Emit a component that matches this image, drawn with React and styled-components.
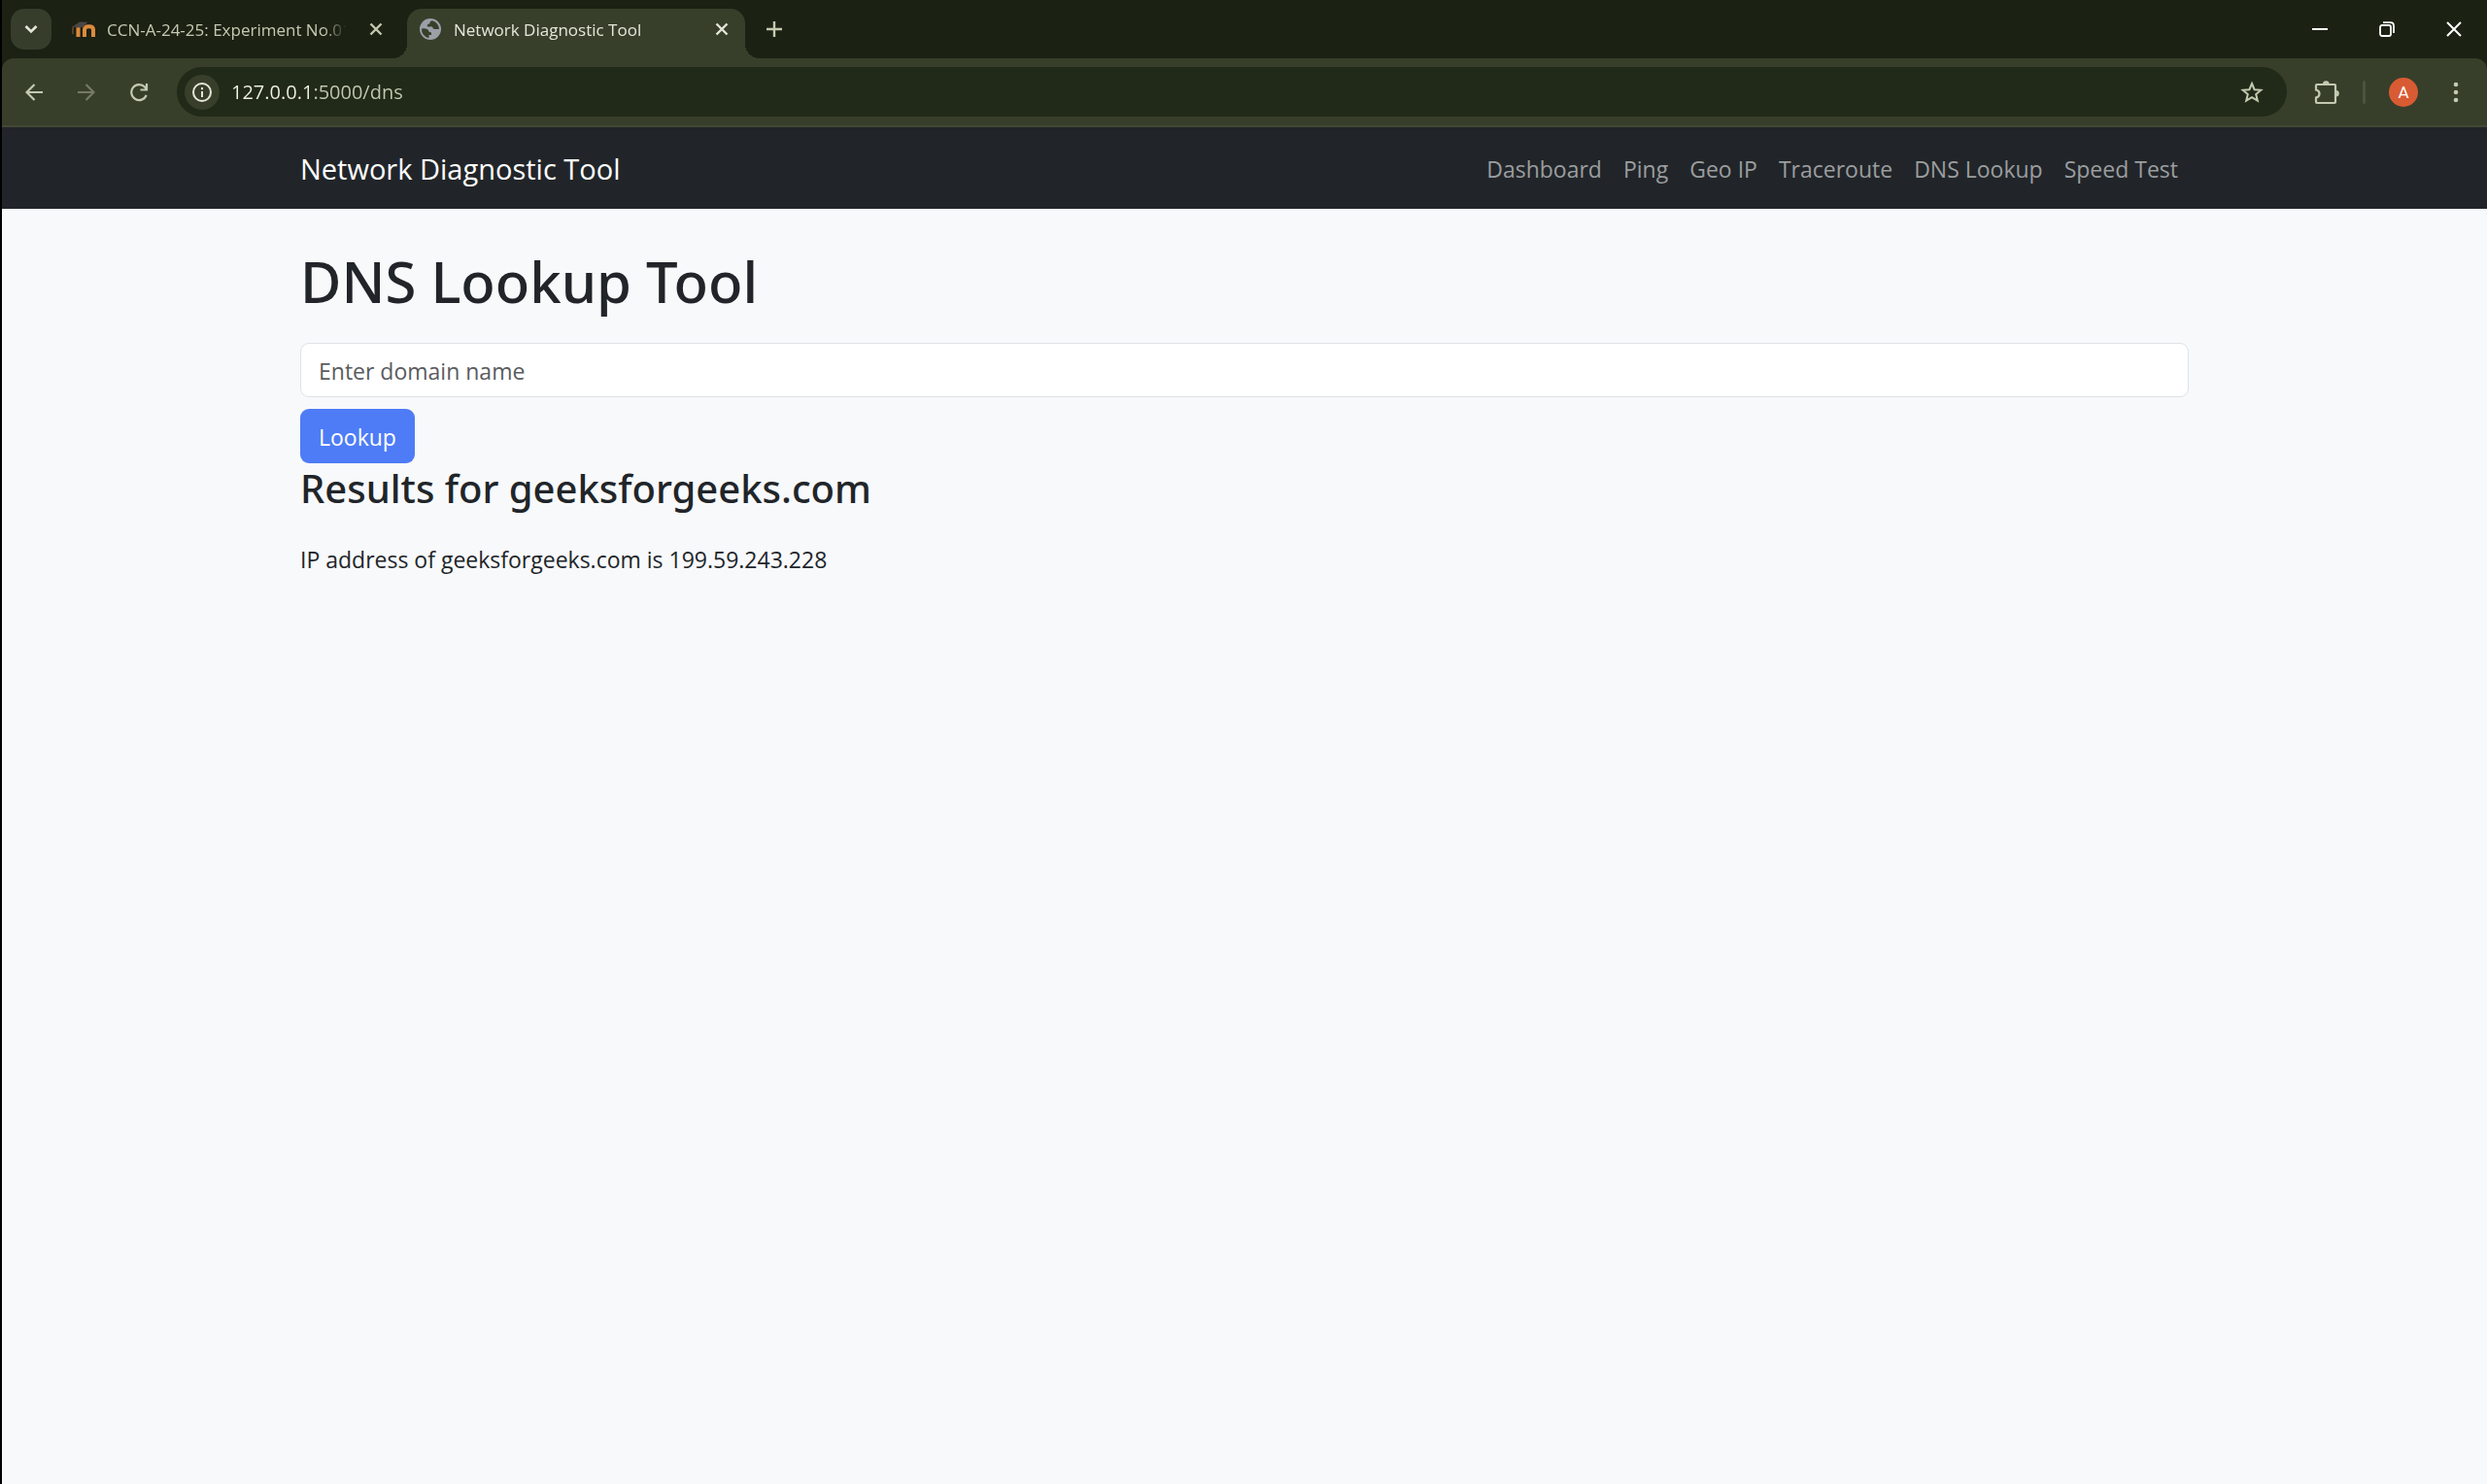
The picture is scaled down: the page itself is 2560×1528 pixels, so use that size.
import React, { useState } from 'react';
import styled, { createGlobalStyle, css } from 'styled-components';

const GlobalStyle = createGlobalStyle`
  *, *::before, *::after { box-sizing: border-box; }
  body {
    margin: 0;
    background: #f8f9fb;
    color: #212529;
    font-family: "Open Sans", "Noto Sans", sans-serif;
    font-size: 23px;
    line-height: 36px;
  }
  button, input { font: inherit; }
`;

const Window = styled.div`
  display: flex;
  flex-direction: column;
  min-height: 100vh;
  border-left: 2px solid #000;
`;

/* ---------- browser frame ---------- */

const TabStrip = styled.header`
  display: flex;
  align-items: flex-end;
  height: 60px;
  background: #1b2113;
`;

const Plain = styled.button`
  display: flex;
  align-items: center;
  justify-content: center;
  flex: none;
  padding: 0;
  border: 0;
  background: none;
  color: ${(p) => p.$color || '#c4cab0'};
`;

const TabSearch = styled(Plain)`
  width: 42px;
  height: 42px;
  margin: 0 9px 9px;
  border-radius: 14px;
  background: #363e2b;
  color: #e4e6d8;
`;

const Tabs = styled.div`
  display: flex;
  align-items: flex-end;
`;

const Tab = styled.div`
  position: relative;
  display: flex;
  align-items: center;
  width: ${(p) => (p.$active ? 348 : 357)}px;
  height: 51px;
  padding: 0 ${(p) => (p.$active ? 12 : 20)}px 9px 12px;
  gap: 12px;
  color: #c4cab0;
  ${(p) =>
    p.$active &&
    css`
      color: #e4e6d8;
      background: #373f2b;
      border-radius: 15px 15px 0 0;
      &::before,
      &::after {
        content: '';
        position: absolute;
        bottom: 0;
        width: 15px;
        height: 15px;
      }
      &::before {
        left: -15px;
        background: radial-gradient(circle at 0 0, transparent 15px, #373f2b 15px);
      }
      &::after {
        right: -15px;
        background: radial-gradient(circle at 100% 0, transparent 15px, #373f2b 15px);
      }
    `}
`;

const TabTitle = styled.span`
  flex: 1;
  overflow: hidden;
  padding-top: 2px;
  white-space: nowrap;
  font-size: 17px;
  line-height: 24px;
  mask-image: linear-gradient(90deg, #000 calc(100% - 30px), transparent calc(100% - 6px));
`;

const NewTab = styled(Plain)`
  width: 42px;
  height: 42px;
  margin: 0 0 9px 9px;
`;

const TabClose = styled(Plain)`
  width: 24px;
  height: 24px;
`;

const WindowControls = styled.div`
  display: flex;
  height: 60px;
  margin-left: auto;
`;

const WindowControl = styled(Plain)`
  width: 69px;
  color: #fff;
`;

const ToolbarBack = styled.div`
  background: #1b2113;
`;

const Toolbar = styled.div`
  display: flex;
  align-items: center;
  height: 71px;
  padding: 0 5px 0 6px;
  border-radius: 12px 12px 0 0;
  border-bottom: 2px solid #414836;
  background: #373f2b;
`;

const ToolButton = styled(Plain)`
  width: 54px;
  height: 51px;
`;

const Omnibox = styled.div`
  display: flex;
  align-items: center;
  flex: 1;
  height: 51px;
  margin: 0 14px 0 12px;
  padding: 0 8px;
  border-radius: 26px;
  background: #212918;
`;

const SiteInfo = styled(Plain)`
  width: 36px;
  height: 36px;
  border-radius: 50%;
  background: #373f2b;
`;

const Address = styled.input`
  flex: 1;
  min-width: 0;
  padding: 0 12px;
  border: 0;
  outline: 0;
  font-size: 20px;
  line-height: 30px;
  background: linear-gradient(90deg, #f0f2e4 98px, #c4cab0 98px);
  background-clip: text;
  -webkit-text-fill-color: transparent;
`;

const Bookmark = styled(Plain)`
  width: 56px;
  height: 51px;
`;

const Divider = styled.span`
  width: 3px;
  height: 24px;
  margin: 0 12px 0 10px;
  border-radius: 2px;
  background: #4c5340;
`;

const Avatar = styled.span`
  width: 30px;
  height: 30px;
  border-radius: 50%;
  background: #d95b33;
  color: #fff;
  font-family: Roboto, sans-serif;
  font-size: 17px;
  line-height: 31px;
  text-align: center;
`;

/* ---------- page ---------- */

const Container = styled.div`
  width: 100%;
  max-width: 1980px;
  margin: 0 auto;
  padding: 0 18px;
`;

const Navbar = styled.nav`
  background: #212529;
`;

const NavRow = styled(Container)`
  display: flex;
  align-items: center;
  justify-content: space-between;
  min-height: 84px;
`;

const Brand = styled.a`
  color: #fff;
  font-size: 29px;
  line-height: 45px;
  text-decoration: none;
`;

const NavLinks = styled.ul`
  display: flex;
  margin: 0;
  padding: 0;
  list-style: none;
`;

const NavLink = styled.a`
  display: block;
  padding: 13px 11px 11px;
  color: #9b9d9f;
  text-decoration: none;
`;

const Main = styled(Container).attrs({ as: 'main' })`
  padding-top: 39px;
`;

const Title = styled.h1`
  margin: 0 0 27px;
  font-family: "Noto Sans", sans-serif;
  font-size: 58px;
  font-weight: 500;
  line-height: 72px;
`;

const Form = styled.form`
  display: flex;
  flex-direction: column;
  align-items: flex-start;
  gap: 12px;
`;

const DomainInput = styled.input`
  width: 100%;
  height: 56px;
  padding: 10px 18px 8px;
  border: 1px solid #dee2e6;
  border-radius: 9px;
  background: #fff;
  color: #212529;
  &::placeholder { color: #595c5f; opacity: 1; }
`;

const Submit = styled.button`
  height: 56px;
  padding: 2px 19px 0;
  border: 0;
  border-radius: 9px;
  background: #4e7cf6;
  color: #fff;
`;

const ResultTitle = styled.h2`
  margin: 0 0 29px;
  font-family: "Noto Sans", sans-serif;
  font-size: 40px;
  font-weight: 500;
  line-height: 52px;
`;

const Result = styled.p`
  margin: 0;
`;

/* ---------- icons ---------- */

const Icon = ({ size = 24, box = 24, width = 2, children }) => (
  <svg width={size} height={size} viewBox={`0 0 ${box} ${box}`} fill="none" stroke="currentColor" strokeWidth={width} aria-hidden="true">
    {children}
  </svg>
);

const CrossIcon = () => (
  <Icon size={14} box={14} width={2.4}><path d="M1.5 1.5l11 11M12.5 1.5l-11 11" /></Icon>
);

const MoodleIcon = () => (
  <svg width="24" height="24" viewBox="0 0 24 24" fill="none" aria-hidden="true">
    <path d="M6.500 20V10M13 20v-7.500q0-3.300 4.500-3.300t4.500 3.300V20" stroke="#dd8a3c" strokeWidth="4" />
    <path d="M1 9l7-4.500 8 .3-4 5.200-7 .5z" fill="#4a4644" />
    <path d="M1.500 9q-1 4-.5 8" stroke="#6b4a30" strokeWidth="1.500" />
  </svg>
);

const GlobeIcon = () => (
  <svg width="24" height="24" viewBox="0 0 24 24" aria-hidden="true">
    <circle cx="12" cy="12" r="11" fill="#9aa0a6" />
    <path d="M3 11.500q5-.8 7 1.500 0 2.500 3 2.500v2.500h-2.500v3.200A9 9 0 0 1 3 11.500zM14 3.300q-3 .7-2.500 3-3.500.5-2.500 3.200h5q.5 3 3.500 2.500h3.500A9 9 0 0 0 14 3.300z" fill="#373f2b" />
  </svg>
);

const LINKS = ['Dashboard', 'Ping', 'Geo IP', 'Traceroute', 'DNS Lookup', 'Speed Test'];

export default function App() {
  const [url, setUrl] = useState('127.0.0.1:5000/dns');
  return (
    <Window>
      <GlobalStyle />
      <TabStrip>
        <TabSearch aria-label="Search tabs">
          <Icon size={14} box={14} width={2.6}><path d="M1.500 4l5.500 5.500L12.500 4" /></Icon>
        </TabSearch>
        <Tabs>
          <Tab>
            <MoodleIcon />
            <TabTitle>CCN-A-24-25: Experiment No.01</TabTitle>
            <TabClose aria-label="Close tab"><CrossIcon /></TabClose>
          </Tab>
          <Tab $active>
            <GlobeIcon />
            <TabTitle>Network Diagnostic Tool</TabTitle>
            <TabClose aria-label="Close tab" $color="#e4e6d8"><CrossIcon /></TabClose>
          </Tab>
        </Tabs>
        <NewTab aria-label="New tab">
          <Icon size={16} box={16} width={2.4}><path d="M8 0v16M0 8h16" /></Icon>
        </NewTab>
        <WindowControls>
          <WindowControl aria-label="Minimize"><Icon size={16} box={16}><path d="M0 8h16" /></Icon></WindowControl>
          <WindowControl aria-label="Restore">
            <Icon size={16} box={16} width={1.8}>
              <rect x="1" y="4" width="11" height="11" rx="2" />
              <path d="M4 1.200h7.500q3.500 0 3.500 3.500V12" />
            </Icon>
          </WindowControl>
          <WindowControl aria-label="Close"><Icon size={16} box={16}><path d="M1 1l14 14M15 1L1 15" /></Icon></WindowControl>
        </WindowControls>
      </TabStrip>
      <ToolbarBack>
        <Toolbar>
          <ToolButton aria-label="Back">
            <Icon size={18} box={18} width={2.2}><path d="M18 9H2M9.500 1L1.500 9l8 8" /></Icon>
          </ToolButton>
          <ToolButton aria-label="Forward" $color="#757a66">
            <Icon size={18} box={18} width={2.2}><path d="M0 9h16M8.500 1l8 8-8 8" /></Icon>
          </ToolButton>
          <ToolButton aria-label="Reload">
            <Icon size={20} box={20} width={2.2}><path d="M17.700 13A8 8 0 1 1 16 4.500L18 7M18 1v6.500h-6.500" /></Icon>
          </ToolButton>
          <Omnibox>
            <SiteInfo aria-label="Site information" $color="#e4e6d8">
              <Icon size={20} box={20}><circle cx="10" cy="10" r="9" /><path d="M10 9v6M10 5v2.200" /></Icon>
            </SiteInfo>
            <Address aria-label="Address" value={url} onChange={(e) => setUrl(e.target.value)} />
            <Bookmark aria-label="Bookmark">
              <Icon size={24} box={24}>
                <path d="M12 3l2.600 6.200 6.700.6-5.100 4.300 1.600 6.500-5.800-3.500-5.800 3.500 1.600-6.500-5.100-4.300 6.700-.6z" />
              </Icon>
            </Bookmark>
          </Omnibox>
          <ToolButton aria-label="Extensions">
            <Icon size={26} box={26} width={2.2}>
              <path d="M3 5h18q1 0 1 1v17q0 1-1 1H3q-1 0-1-1v-4.500q3.500-.8 3.500-4T2 10.500V6q0-1 1-1z" />
              <path d="M9 4.500a3.300 3.300 0 0 1 6.600 0zM22.500 11a3.300 3.300 0 0 1 0 6.600z" fill="currentColor" stroke="none" />
            </Icon>
          </ToolButton>
          <Divider />
          <ToolButton aria-label="Profile"><Avatar>A</Avatar></ToolButton>
          <ToolButton aria-label="Menu">
            <svg width="6" height="22" viewBox="0 0 6 22" fill="currentColor" aria-hidden="true">
              <circle cx="3" cy="3" r="2.300" /><circle cx="3" cy="11" r="2.300" /><circle cx="3" cy="19" r="2.300" />
            </svg>
          </ToolButton>
        </Toolbar>
      </ToolbarBack>
      <Navbar>
        <NavRow>
          <Brand href="#">Network Diagnostic Tool</Brand>
          <NavLinks>
            {LINKS.map((name) => (
              <li key={name}><NavLink href="#">{name}</NavLink></li>
            ))}
          </NavLinks>
        </NavRow>
      </Navbar>
      <Main>
        <Title>DNS Lookup Tool</Title>
        <Form onSubmit={(e) => e.preventDefault()}>
          <DomainInput aria-label="Domain name" placeholder="Enter domain name" />
          <Submit>Lookup</Submit>
        </Form>
        <ResultTitle>Results for geeksforgeeks.com</ResultTitle>
        <Result>IP address of geeksforgeeks.com is 199.59.243.228</Result>
      </Main>
    </Window>
  );
}
